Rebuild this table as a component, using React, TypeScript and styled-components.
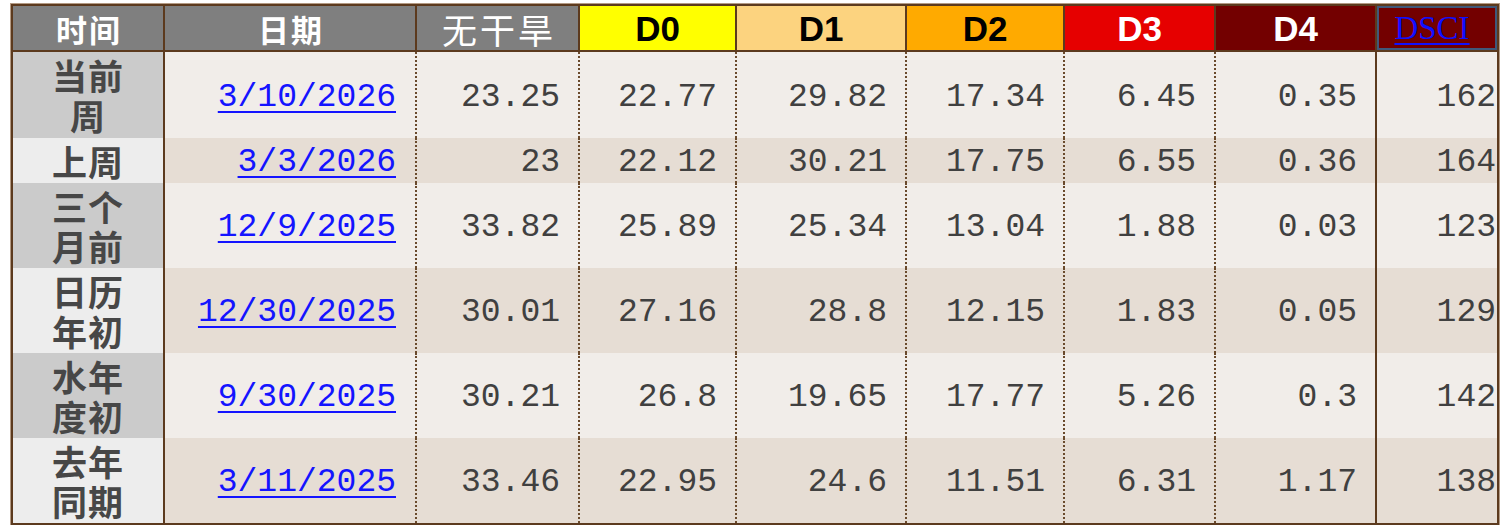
import styled, { createGlobalStyle } from "styled-components";

const GlobalStyle = createGlobalStyle`
  html, body {
    margin: 0;
    padding: 0;
    background: #ffffff;
  }
`;

const brown = "#5c3a1e";

const Wrap = styled.div`
  padding: 4px 0 0 11px;
`;

const Grid = styled.div`
  display: grid;
  width: 1484px;
  grid-template-columns: 152px 252px 163px 157px 170px 158px 151px 161px 120px;
  grid-template-rows: 46px 86px 45px repeat(4, 85px);
  border: 2px solid ${brown};
  box-shadow: 0 0 0 1px #b39a84;
`;

const HeadCell = styled.div<{ $bg: string; $color: string; $last?: boolean }>`
  box-sizing: border-box;
  display: flex;
  align-items: center;
  justify-content: center;
  background: ${(p) => p.$bg};
  color: ${(p) => p.$color};
  border-bottom: 2px solid ${brown};
  border-right: ${(p) => (p.$last ? "none" : `2px solid ${brown}`)};
`;

const HeadCjk = styled.span<{ $bold?: boolean }>`
  font-family: "Noto Sans CJK SC", sans-serif;
  font-size: ${(p) => (p.$bold ? "31px" : "35px")};
  font-weight: ${(p) => (p.$bold ? 700 : 400)};
  letter-spacing: ${(p) => (p.$bold ? "2px" : "3px")};
  line-height: 1;
  padding-left: ${(p) => (p.$bold ? "2px" : "3px")};
`;

const HeadLevel = styled.span`
  font-family: "Liberation Sans", Arial, sans-serif;
  font-size: 35px;
  font-weight: 700;
  line-height: 1;
`;

const DsciHead = styled(HeadCell)`
  box-shadow: inset 0 0 0 2px #40587a;
  border-right: none;
`;

const DsciLink = styled.a`
  font-family: "Liberation Serif", "Times New Roman", serif;
  font-size: 33px;
  line-height: 1;
  color: #1010ff;
  text-decoration: underline;
  text-decoration-thickness: 2px;
  text-underline-offset: 4px;
  margin-right: 10px;
`;

const LabelCell = styled.div<{ $alt: boolean }>`
  box-sizing: border-box;
  display: flex;
  align-items: center;
  justify-content: center;
  background: ${(p) => (p.$alt ? "#ededed" : "#cbcbcb")};
  border-right: 2px solid ${brown};
  font-family: "Noto Sans CJK SC", sans-serif;
  font-size: 35px;
  font-weight: 700;
  line-height: 40px;
  color: #474747;
  letter-spacing: 1px;
  text-align: center;
  white-space: pre-line;
`;

const DataCell = styled.div<{ $alt: boolean; $edge?: "dotted" | "solid" | "none"; $pad?: number }>`
  box-sizing: border-box;
  display: flex;
  align-items: center;
  justify-content: flex-end;
  padding-top: 4px;
  padding-right: ${(p) => p.$pad ?? 18}px;
  background: ${(p) => (p.$alt ? "#e6ddd4" : "#f1ede9")};
  border-right: ${(p) =>
    p.$edge === "none"
      ? "none"
      : p.$edge === "solid"
      ? `2px solid ${brown}`
      : `2px dotted #6a4a2c`};
  font-family: "Liberation Mono", "Courier New", monospace;
  font-size: 33px;
  color: #404040;
  white-space: nowrap;
`;

const DateLink = styled.a`
  color: #1414ff;
  text-decoration: underline;
  text-decoration-thickness: 2px;
  text-underline-offset: 5px;
`;

type Row = {
  label: string;
  date: string;
  vals: string[];
  dsci: string;
};

const rows: Row[] = [
  { label: "当前\n周", date: "3/10/2026", vals: ["23.25", "22.77", "29.82", "17.34", "6.45", "0.35"], dsci: "162" },
  { label: "上周", date: "3/3/2026", vals: ["23", "22.12", "30.21", "17.75", "6.55", "0.36"], dsci: "164" },
  { label: "三个\n月前", date: "12/9/2025", vals: ["33.82", "25.89", "25.34", "13.04", "1.88", "0.03"], dsci: "123" },
  { label: "日历\n年初", date: "12/30/2025", vals: ["30.01", "27.16", "28.8", "12.15", "1.83", "0.05"], dsci: "129" },
  { label: "水年\n度初", date: "9/30/2025", vals: ["30.21", "26.8", "19.65", "17.77", "5.26", "0.3"], dsci: "142" },
  { label: "去年\n同期", date: "3/11/2025", vals: ["33.46", "22.95", "24.6", "11.51", "6.31", "1.17"], dsci: "138" },
];

const levels = [
  { name: "D0", bg: "#ffff00", color: "#000000" },
  { name: "D1", bg: "#fcd37f", color: "#000000" },
  { name: "D2", bg: "#ffaa00", color: "#000000" },
  { name: "D3", bg: "#e60000", color: "#ffffff" },
  { name: "D4", bg: "#730000", color: "#ffffff" },
];

export default function App() {
  return (
    <Wrap>
      <GlobalStyle />
      <Grid>
        <HeadCell $bg="#7f7f7f" $color="#ffffff">
          <HeadCjk $bold>时间</HeadCjk>
        </HeadCell>
        <HeadCell $bg="#7f7f7f" $color="#ffffff">
          <HeadCjk $bold>日期</HeadCjk>
        </HeadCell>
        <HeadCell $bg="#7f7f7f" $color="#ffffff">
          <HeadCjk>无干旱</HeadCjk>
        </HeadCell>
        {levels.map((l) => (
          <HeadCell key={l.name} $bg={l.bg} $color={l.color}>
            <HeadLevel>{l.name}</HeadLevel>
          </HeadCell>
        ))}
        <DsciHead $bg="#730000" $color="#1010ff" $last>
          <DsciLink href="#">DSCI</DsciLink>
        </DsciHead>

        {rows.map((r, i) => {
          const alt = i % 2 === 1;
          return [
            <LabelCell key={`l${i}`} $alt={alt}>
              {r.label}
            </LabelCell>,
            <DataCell key={`d${i}`} $alt={alt} $pad={19}>
              <DateLink href="#">{r.date}</DateLink>
            </DataCell>,
            ...r.vals.map((v, j) => (
              <DataCell
                key={`v${i}-${j}`}
                $alt={alt}
                $edge={j === r.vals.length - 1 ? "solid" : "dotted"}
              >
                {v}
              </DataCell>
            )),
            <DataCell key={`s${i}`} $alt={alt} $edge="none" $pad={1}>
              {r.dsci}
            </DataCell>,
          ];
        })}
      </Grid>
    </Wrap>
  );
}
